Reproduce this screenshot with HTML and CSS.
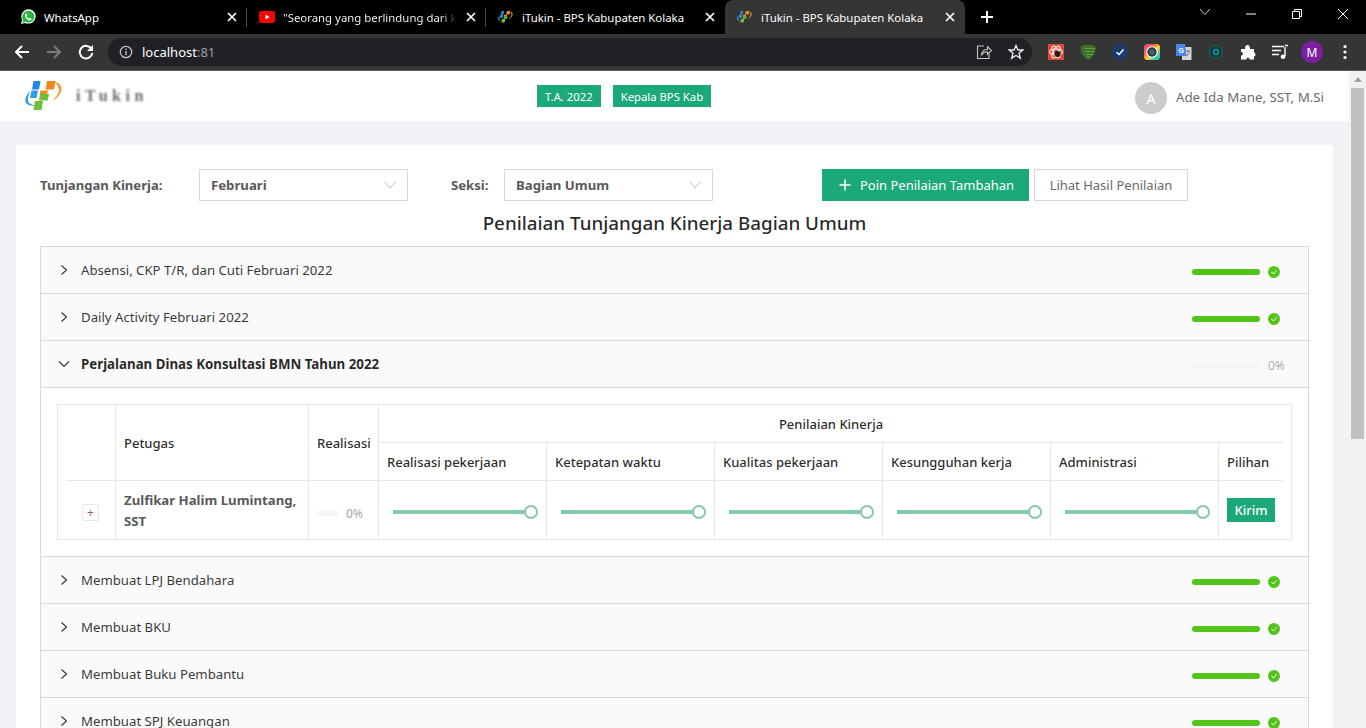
FILE: index.html
```html
<!DOCTYPE html>
<html lang="id">
<head>
<meta charset="utf-8">
<title>iTukin - BPS Kabupaten Kolaka</title>
<link rel="stylesheet" href="styles.css">
</head>
<body>
<svg class="defs" width="0" height="0" aria-hidden="true">
  <symbol id="bps" viewBox="0 0 40 32">
    <path d="M29 1.500C35 3 38 7 36 12C34 16 31 19 27 21C32 16 35 12 33.500 8C32.500 5 31 3 29 1.500Z" fill="#f2a03d"/>
    <path d="M5 11C1 15 -1 20 1 23C3 25.500 7 26 11 25.500C7 25 3.500 23.500 3 20.500C2.700 17.500 4 14 5 11Z" fill="#3a9bdc"/>
    <path d="M8.500 1H15.500L14 9.500H7Z" fill="#1e88e5"/>
    <path d="M6.500 10.500H13L11.500 18H5Z" fill="#2aa0e0"/>
    <path d="M22 1H30.500L29 9.500H20.500Z" fill="#f08c1e"/>
    <path d="M15.500 10.500H23L22 14H14.800Z" fill="#f08c1e"/>
    <path d="M15 14H24L22.800 20.500H14Z" fill="#6fbf3a"/>
    <path d="M10 21H18L16.500 30H8.500Z" fill="#6fbf3a"/>
  </symbol>
  <symbol id="close" viewBox="0 0 10 10"><path d="M1 1L9 9M9 1L1 9" stroke="#fff" stroke-width="1.700" fill="none"/></symbol>
  <symbol id="right" viewBox="0 0 10 10"><path d="M2.500 .5L7.500 5L2.500 9.500" stroke="#333" stroke-width="1.100" fill="none"/></symbol>
  <symbol id="down" viewBox="0 0 12 12"><path d="M1 3.500L6 8.500L11 3.500" stroke="#333" stroke-width="1.100" fill="none"/></symbol>
  <symbol id="sel" viewBox="0 0 12 8"><path d="M.5 .5L6 7L11.500 .5" stroke="#bfbfbf" stroke-width="1" fill="none"/></symbol>
  <symbol id="ok" viewBox="0 0 12 12"><circle cx="6" cy="6" r="6" fill="#52c41a"/><path d="M3.500 6L5.400 8L8.500 4.300" stroke="#fff" stroke-width="1" fill="none"/></symbol>
</svg>

<div class="tabs">
  <div class="tab">
    <svg class="fav" viewBox="0 0 16 16"><path d="M1 15L2.100 11C.3 7.500 1.500 3 5 1.200C9 -.8 13.800 .9 15.300 5C16.600 9.200 13.900 13.800 9.500 14.500C7.700 14.800 6 14.500 4.800 13.900Z" fill="#fff"/><path d="M2.300 13.700L3 11C1.500 8 2.500 4.200 5.500 2.500C8.800 .9 12.900 2.400 14.100 5.700C15.200 9.300 12.800 13 9.200 13.400C7.700 13.600 6.200 13.300 5 12.700Z" fill="#2ab540"/><path d="M5.800 4.500C5 5 4.700 6.200 5.500 8C6.500 10 8.300 11.500 10 11.500C11 11.300 11.500 10.500 11.500 9.700L9.800 8.800L9 9.700C8 9.300 7 8.300 6.600 7.300L7.300 6.400L6.600 4.600Z" fill="#fff"/></svg>
    <span class="tab-title">WhatsApp</span>
    <svg class="tab-x"><use href="#close"/></svg>
  </div>
  <div class="tab">
    <svg class="fav" viewBox="0 0 16 16"><rect y="2" width="16" height="12" rx="3" fill="#f00"/><path d="M6.500 5.500L10.500 8L6.500 10.500Z" fill="#fff"/></svg>
    <span class="tab-title fade">"Seorang yang berlindung dari ke</span>
    <svg class="tab-x"><use href="#close"/></svg>
  </div>
  <div class="tab">
    <svg class="fav"><use href="#bps"/></svg>
    <span class="tab-title">iTukin - BPS Kabupaten Kolaka</span>
    <svg class="tab-x"><use href="#close"/></svg>
  </div>
  <div class="tab tab-active">
    <svg class="fav"><use href="#bps"/></svg>
    <span class="tab-title">iTukin - BPS Kabupaten Kolaka</span>
    <svg class="tab-x"><use href="#close"/></svg>
  </div>
  <svg class="new-tab" viewBox="0 0 12 12"><path d="M6 0V12M0 6H12" stroke="#fff" stroke-width="2"/></svg>
  <div class="win">
    <svg class="win-btn win-chev" viewBox="0 0 12 8"><path d="M1 1L6 6.500L11 1" stroke="#ccc" fill="none"/></svg>
    <svg class="win-btn" viewBox="0 0 12 12"><path d="M1 6H11" stroke="#fff"/></svg>
    <svg class="win-btn" viewBox="0 0 12 12"><path d="M1.500 3.500H8.500V10.500H1.500ZM3.500 3.500V1.500H10.500V8.500H8.500" stroke="#fff" fill="none"/></svg>
    <svg class="win-btn" viewBox="0 0 12 12"><path d="M1 1L11 11M11 1L1 11" stroke="#fff" fill="none"/></svg>
  </div>
</div>

<div class="toolbar">
  <svg class="nav" viewBox="0 0 16 16"><path d="M15 8H2M8 2L2 8L8 14" stroke="#fff" stroke-width="2" fill="none"/></svg>
  <svg class="nav" viewBox="0 0 16 16"><path d="M1 8H14M8 2L14 8L8 14" stroke="#7c7c7c" stroke-width="2" fill="none"/></svg>
  <svg class="nav" viewBox="0 0 16 16"><path d="M13.500 5A6.300 6.300 0 1 0 14.300 9" stroke="#fff" stroke-width="2" fill="none"/><path d="M15 1V7H9Z" fill="#fff"/></svg>
  <div class="omni">
    <svg class="info" viewBox="0 0 14 14"><circle cx="7" cy="7" r="5.700" stroke="#c4c7c5" stroke-width="1.200" fill="none"/><path d="M7 6V10.300M7 3.500V5" stroke="#c4c7c5" stroke-width="1.300"/></svg>
    <span class="url">localhost<span class="port">:81</span></span>
    <svg class="omni-ico omni-share" viewBox="0 0 16 16"><path d="M8 2H1.500V14.500H13V10" stroke="#c4c7c5" stroke-width="1.100" fill="none"/><path d="M5.500 11C6 7 9 5.500 11.500 5.500V2.500L15.500 6.500L11.500 10.500V7.800C9 7.800 7 9 5.500 11Z" stroke="#c4c7c5" stroke-width="1.100" fill="none"/></svg>
    <svg class="omni-ico" viewBox="0 0 16 16"><path d="M8 1.500L10 6H14.800L11 9.200L12.300 14.200L8 11.500L3.700 14.200L5 9.200L1.200 6H6Z" stroke="#e8eaed" stroke-width="1.400" fill="none"/></svg>
  </div>
  <div class="exts">
    <svg class="ext" viewBox="0 0 16 16"><rect width="16" height="16" fill="#dc4a38"/><g fill="none" stroke="#f6d6d0" stroke-width="1.300"><ellipse cx="8" cy="8" rx="6.500" ry="2.800"/><ellipse cx="8" cy="8" rx="6.500" ry="2.800" transform="rotate(60 8 8)"/><ellipse cx="8" cy="8" rx="6.500" ry="2.800" transform="rotate(120 8 8)"/></g><circle cx="9.500" cy="10" r="3" fill="#2a1c1a"/></svg>
    <svg class="ext" viewBox="0 0 16 16"><path d="M.5 2.500C5 .3 11 .3 15.500 2.500C15.500 8 13 13 8 16C3 13 .5 8 .5 2.500Z" fill="#3b6f2b"/><path d="M4 4.500H15.500M5 7.500H15M6 10.500H13.500M7 13H11" stroke="#5fa13f" stroke-width="1.200"/></svg>
    <svg class="ext" viewBox="0 0 16 16"><circle cx="8" cy="8" r="8" fill="#1c3d6b"/><path d="M4.500 8.300L7 10.500L11.500 5.500" stroke="#fff" stroke-width="1.500" fill="none"/></svg>
    <svg class="ext" viewBox="0 0 16 16"><defs><linearGradient id="ring" x1="0" y1="0" x2="1" y2="1"><stop offset="0" stop-color="#e73a9f"/><stop offset=".35" stop-color="#ff6a3d"/><stop offset=".55" stop-color="#ffd23f"/><stop offset=".8" stop-color="#2fd68f"/><stop offset="1" stop-color="#29b6f6"/></linearGradient></defs><rect width="16" height="16" rx="3.500" fill="url(#ring)"/><circle cx="8" cy="8" r="5.800" fill="#fff"/><circle cx="8" cy="8" r="4.700" fill="#2b3a4a"/><circle cx="8" cy="8" r="2.700" fill="#4b5f74"/></svg>
    <svg class="ext" viewBox="0 0 16 16"><path d="M6 3H15.500V16H6Z" fill="#d5d5d5"/><path d="M0 0H9L10.500 12H0Z" fill="#4a86e8"/><path d="M10 7H14M12 6V8M10.500 12L13.500 8" stroke="#777" fill="none"/><text class="ext-g" x="2.500" y="8.500">G</text></svg>
    <svg class="ext" viewBox="0 0 16 16"><circle cx="8" cy="8" r="6.500" fill="#123b40" stroke="#0d6b73" stroke-width="1"/><circle cx="8" cy="8" r="2.500" fill="none" stroke="#169aa5" stroke-width="1.300"/></svg>
    <svg class="ext" viewBox="0 0 16 16"><path d="M1 5H5C5 2.500 6 1 7.500 1S10 2.500 10 5H14V8.500C16 8.500 16 13 14 12.500V15.500H9.500C10 13 6 13 6.500 15.500H1V11.500C3.500 11.500 3.500 7.500 1 8Z" fill="#fff"/></svg>
    <svg class="ext" viewBox="0 0 16 16"><path d="M0 2.500H12M0 6.500H9M0 10.500H7" stroke="#fff" stroke-width="1.400"/><path d="M13 3V12.500" stroke="#fff" stroke-width="1.400"/><path d="M13 1.500H16" stroke="#fff" stroke-width="1.500"/><circle cx="11" cy="12.800" r="2.300" fill="#fff"/></svg>
    <span class="profile">M</span>
    <svg class="dots" viewBox="0 0 4 16"><circle cx="2" cy="2.500" r="1.600" fill="#fff"/><circle cx="2" cy="8" r="1.600" fill="#fff"/><circle cx="2" cy="13.500" r="1.600" fill="#fff"/></svg>
  </div>
</div>

<div class="viewport">
  <main class="page">
    <header class="topbar">
      <div class="brand">
        <svg class="brand-logo"><use href="#bps"/></svg>
        <span class="brand-name">iTukin</span>
      </div>
      <span class="tag">T.A. 2022</span>
      <span class="tag">Kepala BPS Kab</span>
      <div class="user">
        <span class="avatar">A</span>
        <span class="user-name">Ade Ida Mane, SST, M.Si</span>
      </div>
    </header>

    <div class="content">
      <section class="card">
        <div class="filters">
          <span class="filter-label label-a">Tunjangan Kinerja:</span>
          <div class="select"><span>Februari</span><svg class="sel-ico"><use href="#sel"/></svg></div>
          <span class="filter-label label-b">Seksi:</span>
          <div class="select"><span>Bagian Umum</span><svg class="sel-ico"><use href="#sel"/></svg></div>
          <button class="btn btn-primary"><svg class="btn-plus" viewBox="0 0 12 12"><path d="M6 .5V11.500M.5 6H11.500" stroke="#fff" stroke-width="1.600"/></svg>Poin Penilaian Tambahan</button>
          <button class="btn btn-ghost">Lihat Hasil Penilaian</button>
        </div>
        <h1 class="title">Penilaian Tunjangan Kinerja Bagian Umum</h1>

        <div class="accordion">
          <div class="acc-head">
            <svg class="acc-arrow"><use href="#right"/></svg>
            <span class="acc-title">Absensi, CKP T/R, dan Cuti Februari 2022</span>
            <div class="progress"><span class="bar"><span class="bar-fill"></span></span><svg class="ok"><use href="#ok"/></svg></div>
          </div>
          <div class="acc-head">
            <svg class="acc-arrow"><use href="#right"/></svg>
            <span class="acc-title">Daily Activity Februari 2022</span>
            <div class="progress"><span class="bar"><span class="bar-fill"></span></span><svg class="ok"><use href="#ok"/></svg></div>
          </div>
          <div class="acc-head">
            <svg class="acc-arrow acc-arrow-open"><use href="#down"/></svg>
            <span class="acc-title acc-title-open">Perjalanan Dinas Konsultasi BMN Tahun 2022</span>
            <div class="progress"><span class="bar"></span><span class="pct">0%</span></div>
          </div>
          <div class="acc-body">
            <div class="table-wrap">
              <table class="grid">
                <colgroup>
                  <col class="c-exp"><col class="c-name"><col class="c-real">
                  <col class="c-score"><col class="c-score"><col class="c-score"><col class="c-score"><col class="c-score">
                  <col class="c-act">
                </colgroup>
                <thead>
                  <tr class="r-top">
                    <th rowspan="2"></th>
                    <th rowspan="2">Petugas</th>
                    <th rowspan="2">Realisasi</th>
                    <th colspan="6" class="th-group">Penilaian Kinerja</th>
                  </tr>
                  <tr class="r-sub">
                    <th>Realisasi pekerjaan</th>
                    <th>Ketepatan waktu</th>
                    <th>Kualitas pekerjaan</th>
                    <th>Kesungguhan kerja</th>
                    <th>Administrasi</th>
                    <th class="th-end">Pilihan</th>
                  </tr>
                </thead>
                <tbody>
                  <tr class="r-body">
                    <td class="td-exp"><span class="expand">+</span></td>
                    <td class="td-name">Zulfikar Halim Lumintang, SST</td>
                    <td><div class="mini"><span class="mini-bar"></span><span class="pct">0%</span></div></td>
                    <td><div class="slider"><span class="rail"></span><span class="knob"></span></div></td>
                    <td><div class="slider"><span class="rail"></span><span class="knob"></span></div></td>
                    <td><div class="slider"><span class="rail"></span><span class="knob"></span></div></td>
                    <td><div class="slider"><span class="rail"></span><span class="knob"></span></div></td>
                    <td><div class="slider"><span class="rail"></span><span class="knob"></span></div></td>
                    <td class="td-end"><button class="kirim">Kirim</button></td>
                  </tr>
                </tbody>
              </table>
            </div>
          </div>
          <div class="acc-head">
            <svg class="acc-arrow"><use href="#right"/></svg>
            <span class="acc-title">Membuat LPJ Bendahara</span>
            <div class="progress"><span class="bar"><span class="bar-fill"></span></span><svg class="ok"><use href="#ok"/></svg></div>
          </div>
          <div class="acc-head">
            <svg class="acc-arrow"><use href="#right"/></svg>
            <span class="acc-title">Membuat BKU</span>
            <div class="progress"><span class="bar"><span class="bar-fill"></span></span><svg class="ok"><use href="#ok"/></svg></div>
          </div>
          <div class="acc-head">
            <svg class="acc-arrow"><use href="#right"/></svg>
            <span class="acc-title">Membuat Buku Pembantu</span>
            <div class="progress"><span class="bar"><span class="bar-fill"></span></span><svg class="ok"><use href="#ok"/></svg></div>
          </div>
          <div class="acc-head">
            <svg class="acc-arrow"><use href="#right"/></svg>
            <span class="acc-title">Membuat SPJ Keuangan</span>
            <div class="progress"><span class="bar"><span class="bar-fill"></span></span><svg class="ok"><use href="#ok"/></svg></div>
          </div>
        </div>
      </section>
    </div>
  </main>
  <div class="scrollbar">
    <svg class="sb-arrow" viewBox="0 0 8 5"><path d="M4 0L8 5H0Z" fill="#a3a3a3"/></svg>
    <span class="sb-thumb"></span>
  </div>
</div>
</body>
</html>
```

FILE: styles.css
```css
* { box-sizing: border-box; }
html, body { margin: 0; height: 728px; overflow: hidden; }
body {
  display: flex;
  flex-direction: column;
  font-family: "Noto Sans", "Open Sans", sans-serif;
  font-size: 14px;
  color: rgba(0,0,0,.85);
  background: #f0f2f5;
}
.defs { display: block; height: 0; }

/* browser chrome */
.tabs {
  flex: none;
  display: flex;
  align-items: center;
  height: 34px;
  padding-left: 8px;
  background: #000;
  font-family: "Noto Sans", sans-serif;
  font-size: 11.4px;
  color: #fff;
}
.tab {
  position: relative;
  display: flex;
  align-items: center;
  width: 239px;
  height: 34px;
  padding: 0 10px 0 12px;
}
.tab + .tab::before {
  content: "";
  position: absolute;
  left: -1px;
  top: 8px;
  height: 19px;
  width: 1px;
  background: #4a4a4a;
}
.tab-active { width: 240px; background: #353535; border-radius: 8px 8px 0 0; }
.tab-active::before { display: none; }
.fav { flex: none; width: 16px; height: 16px; margin-right: 8px; }
.tab-title { flex: 1; white-space: nowrap; overflow: hidden; min-width: 0; }
.fade { color: transparent; background: linear-gradient(90deg, #fff 88%, #000 97%); -webkit-background-clip: text; background-clip: text; }
.tab-x { flex: none; width: 10px; height: 10px; margin-left: 4px; }
.new-tab { flex: none; width: 12px; height: 12px; margin-left: 16px; }
.win { display: flex; align-items: center; margin-left: auto; height: 34px; padding-right: 17px; }
.win-btn { width: 12px; height: 12px; margin-left: 34px; margin-bottom: 6px; }
.win-chev { height: 8px; margin-bottom: 10px; }

.toolbar {
  flex: none;
  display: flex;
  align-items: center;
  height: 36px;
  padding-left: 14px;
  background: #353535;
}
.nav { flex: none; width: 16px; height: 16px; margin-right: 16px; }
.nav:nth-child(2) { margin-right: 16px; }
.nav:nth-child(3) { margin-right: 14px; }
.omni {
  flex: none;
  display: flex;
  align-items: center;
  width: 924px;
  height: 28px;
  padding: 0 8px 0 11px;
  border-radius: 14px;
  background: #202124;
}
.info { flex: none; width: 14px; height: 14px; margin-right: 9px; }
.url { flex: 1; font-size: 13px; color: #fff; }
.port { color: #9aa0a6; }
.omni-ico { flex: none; width: 16px; height: 16px; margin-left: 16px; }
.exts { flex: 1; display: flex; align-items: center; padding-left: 16px; }
.ext { flex: none; width: 16px; height: 16px; margin-right: 16px; }
.ext-g { font-family: "Liberation Sans", sans-serif; font-size: 7px; font-weight: 700; fill: #fff; }
.profile {
  flex: none;
  display: flex;
  align-items: center;
  justify-content: center;
  width: 22px;
  height: 22px;
  margin-left: -3px;
  border-radius: 50%;
  background: #7b1fa2;
  color: #fff;
  font-size: 12px;
}
.dots { flex: none; width: 4px; height: 16px; margin-left: 20px; }

/* page */
.viewport {
  flex: none;
  display: flex;
  height: 658px;
  border-top: 1px solid #5a5a5a;
  overflow: hidden;
}
.page { flex: 1; min-width: 0; }
.topbar {
  display: flex;
  align-items: center;
  height: 50px;
  padding-left: 25px;
  padding-right: 25px;
  background: #fff;
}
.brand { display: flex; align-items: center; width: 512px; }
.brand-logo { flex: none; width: 40px; height: 32px; margin-right: 11px; filter: blur(.5px); }
.brand-name {
  font-family: "Liberation Serif", serif;
  font-weight: 700;
  font-size: 16px;
  letter-spacing: 4.500px;
  color: #6b6b6b;
  filter: blur(.9px);
}
.tag {
  flex: none;
  display: flex;
  align-items: center;
  height: 22px;
  padding: 0 8px;
  margin-right: 12px;
  background: #1ba97a;
  color: #fff;
  font-size: 11.3px;
}
.user { display: flex; align-items: center; margin-left: auto; margin-top: 4px; }
.avatar {
  display: flex;
  align-items: center;
  justify-content: center;
  width: 32px;
  height: 32px;
  margin-right: 9px;
  border-radius: 50%;
  background: #ccc;
  color: #fff;
}
.user-name { color: #6b6b6b; font-size: 13.3px; margin-top: -2px; }

.content { padding: 24px 16px 0; }
.card { padding: 24px 24px 0; background: #fff; }
.filters { display: flex; align-items: center; height: 32px; }
.filter-label { flex: none; font-weight: 700; font-size: 13.1px; color: #595959; }
.label-a { width: 159px; }
.label-b { width: 53px; margin-left: 43px; }
.select {
  flex: none;
  display: flex;
  align-items: center;
  justify-content: space-between;
  width: 209px;
  height: 32px;
  padding: 0 11px 0 11px;
  border: 1px solid #d9d9d9;
  font-weight: 700;
  font-size: 13.2px;
  color: #595959;
}
.sel-ico { width: 12px; height: 8px; }
.btn {
  flex: none;
  display: flex;
  align-items: center;
  justify-content: center;
  height: 32px;
  border: 1px solid #d9d9d9;
  font: inherit;
  font-size: 13px;
  padding: 0;
}
.btn-primary { width: 207px; padding-left: 2px; margin-left: 109px; margin-right: 5px; background: #1ba97a; border-color: #1ba97a; color: #fff; }
.btn-plus { width: 12px; height: 12px; margin-right: 9px; }
.btn-ghost { width: 154px; background: #fff; color: #6b6b6b; }
.title {
  margin: 0;
  height: 45px;
  line-height: 45px;
  text-align: center;
  font-size: 18.8px;
  font-weight: 500;
  color: rgba(0,0,0,.85);
}

.accordion { border: 1px solid #d9d9d9; border-bottom: 0; background: #fafafa; }
.acc-head {
  display: flex;
  align-items: center;
  height: 47px;
  padding-left: 18px;
  border-bottom: 1px solid #d9d9d9;
}
.acc-arrow { flex: none; width: 10px; height: 10px; margin-right: 12px; margin-top: -1px; }
.acc-arrow-open { width: 12px; height: 12px; margin-left: -1px; margin-right: 11px; }
.acc-title { flex: 1; font-size: 13.2px; margin-top: -1px; color: rgba(0,0,0,.8); }
.acc-title-open { font-size: 13.3px; font-weight: 700; color: rgba(0,0,0,.85); }
.progress { flex: none; display: flex; align-items: center; width: 116px; margin-top: 3px; }
.bar { display: block; width: 68px; height: 6px; margin-right: 8px; border-radius: 3px; background: #f5f5f5; }
.bar-fill { display: block; height: 6px; border-radius: 3px; background: #52c41a; }
.ok { flex: none; width: 12px; height: 12px; }
.pct { font-size: 12px; color: rgba(0,0,0,.35); }

.acc-body { padding: 16px; background: #fff; border-bottom: 1px solid #d9d9d9; }
.table-wrap { padding: 0 8px; border: 1px solid #e8e8e8; background: #fff; }
.grid { table-layout: fixed; width: 1217px; border-collapse: separate; border-spacing: 0; font-size: 13px; }
.c-exp { width: 50px; }
.c-name { width: 193px; }
.c-real { width: 70px; }
.c-score { width: 168px; }
.c-act { width: 64px; }
.grid th, .grid td {
  padding: 0 8px;
  border-right: 1px solid #e8e8e8;
  border-bottom: 1px solid #e8e8e8;
  text-align: left;
  font-weight: 500;
}
.grid td { border-bottom: 0; }
.r-top { height: 38px; }
.r-sub { height: 38px; }
.r-body { height: 58px; }
.grid .th-group { text-align: center; border-right: 0; }
.grid .th-end, .grid .td-end { border-right: 0; }
.grid .td-exp { padding: 3px 0 0; text-align: center; }
.expand {
  display: inline-flex;
  align-items: center;
  justify-content: center;
  width: 17px;
  height: 17px;
  border: 1px solid #e8e8e8;
  border-radius: 2px;
  font-size: 12px;
  font-weight: 400;
  color: #a0605a;
}
.grid .td-name { padding-top: 1px; font-size: 13.2px; font-weight: 700; line-height: 21px; color: #595959; }
.mini { display: flex; align-items: center; margin-top: 6px; }
.mini-bar { width: 21px; height: 6px; margin-right: 8px; border-radius: 3px; background: #f5f5f5; }
.slider { display: flex; align-items: center; padding-left: 6px; margin-top: 4px; }
.rail { width: 135px; height: 4px; background: #85c9ad; }
.knob { flex: none; width: 14px; height: 14px; margin-left: -1px; border: 2px solid #85c9ad; border-radius: 50%; background: #fff; }
.kirim { display: block; width: 48px; height: 24px; padding: 0; border: 0; background: #1ba97a; color: #fff; font: inherit; font-size: 13px; }

.scrollbar { flex: none; position: relative; width: 17px; background: #f1f1f1; display: flex; flex-direction: column; align-items: center; }
.sb-arrow { width: 8px; height: 5px; margin-top: 6px; }
.sb-thumb { width: 13px; height: 351px; margin-top: 6px; background: #c1c1c1; }
```
